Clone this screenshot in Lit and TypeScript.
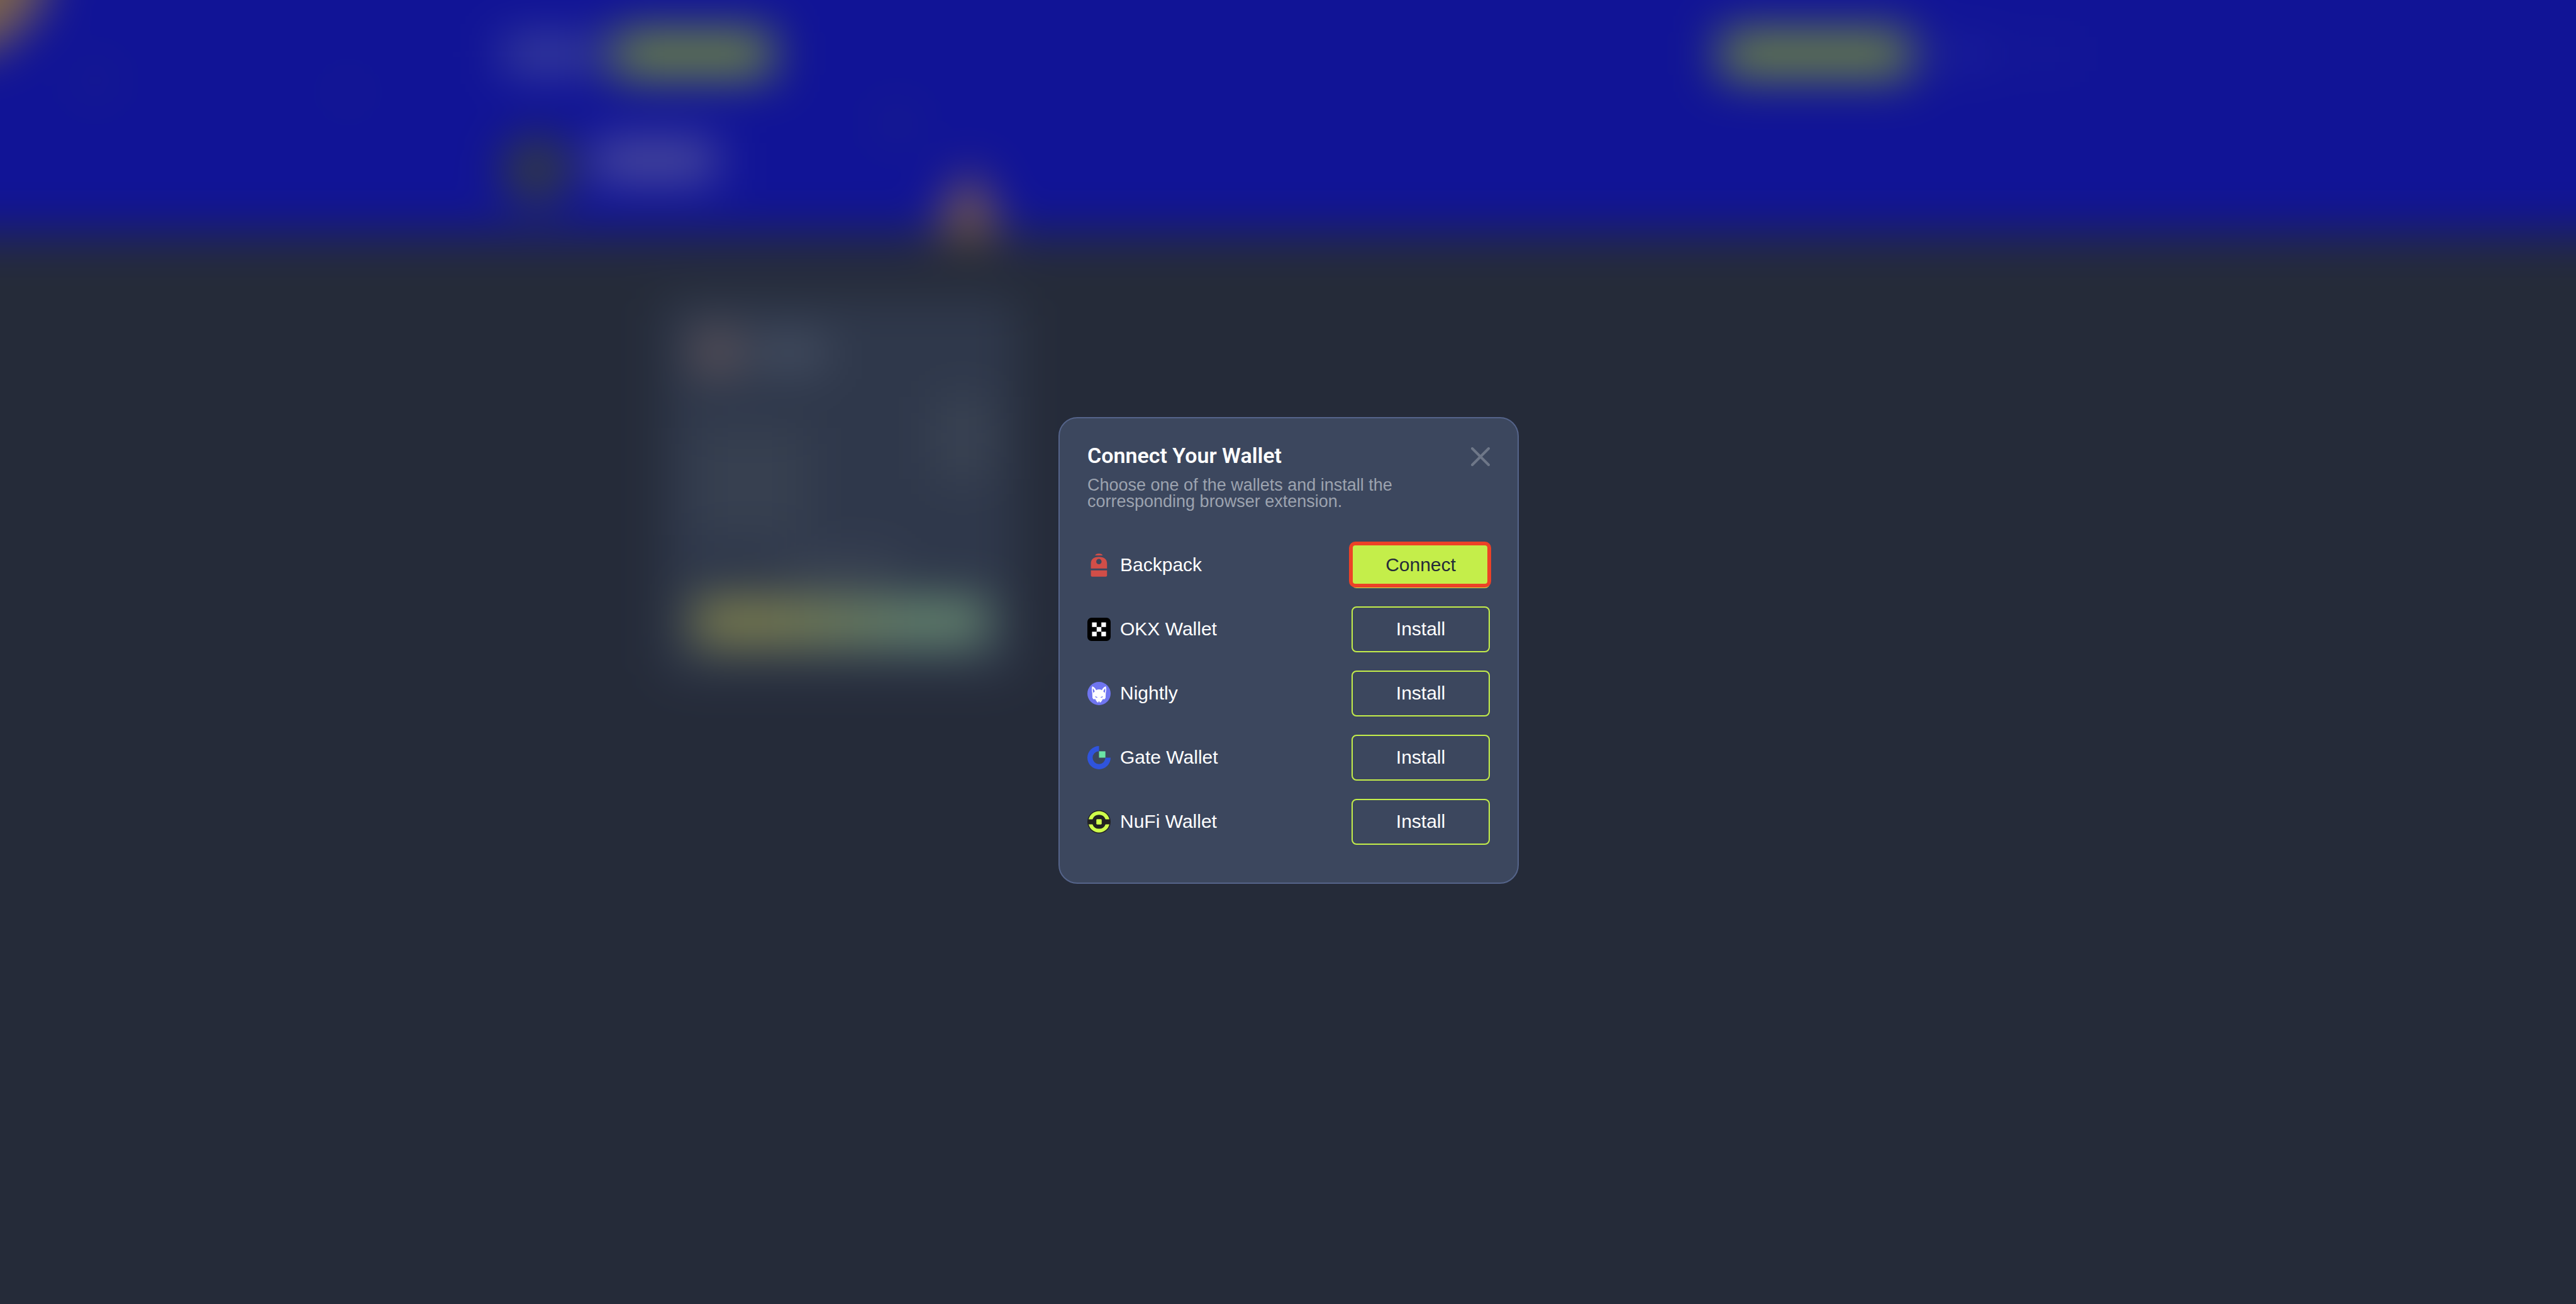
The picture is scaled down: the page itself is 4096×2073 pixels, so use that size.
import { LitElement, html, css, svg, nothing } from "lit";
import { customElement, property } from "lit/decorators.js";

type Wallet = { id: string; name: string; installed: boolean };

const WALLETS: Wallet[] = [
  { id: "backpack", name: "Backpack", installed: true },
  { id: "okx", name: "OKX Wallet", installed: false },
  { id: "nightly", name: "Nightly", installed: false },
  { id: "gate", name: "Gate Wallet", installed: false },
  { id: "nufi", name: "NuFi Wallet", installed: false },
];

const ICONS: Record<string, unknown> = {
  backpack: svg`
    <path fill="#d14e48" d="M13.2 3.3C14 1.2 16.6 0 19.8 0s5.800 1.200 6.600 3.300z"/>
    <path fill="#d14e48" fill-rule="evenodd" d="M6 25.600V17C6 10 11 5.700 19.800 5.700S33.800 10 33.800 17v8.600zM19.800 9.100a4.600 4.600 0 1 0 0 9.200a4.600 4.600 0 1 0 0-9.200z"/>
    <path fill="#d14e48" d="M6 29h27.800v8.600a2.200 2.200 0 0 1-2.200 2.200H8.200A2.200 2.200 0 0 1 6 37.600z"/>`,
  okx: svg`
    <rect width="40" height="40" rx="7" fill="#000"/>
    <path fill="#fff" d="M8 8h8v8H8zM24 8h8v8h-8zM16 16h8v8h-8zM8 24h8v8H8zM24 24h8v8h-8z"/>`,
  nightly: svg`
    <circle cx="20" cy="20" r="20" fill="#6f75f0"/>
    <path fill="#fff" d="M8.300 7.600C11.200 8.800 13.600 11 15.200 14.200C16.600 13.300 18 13 20 13S23.400 13.300 24.800 14.200C26.400 11 28.800 8.800 31.700 7.600C32.800 11.500 32.600 15.500 31.600 19L31.300 27.200L29.800 29.800L26.200 29.600C25.400 32.200 23.600 34.600 21.400 35.600L20.700 33.600H19.300L18.600 35.600C16.400 34.600 14.600 32.200 13.800 29.600L10.200 29.800L8.700 27.200L8.400 19C7.400 15.500 7.200 11.500 8.300 7.600z"/>
    <path fill="#6f75f0" d="M9.500 11.200C11 13 12.200 14.800 12.600 16.600L10.200 18.800C9.300 16.500 9 13.500 9.500 11.200zM30.500 11.200C29 13 27.800 14.800 27.400 16.600L29.800 18.800C30.700 16.500 31 13.500 30.500 11.200zM13.200 24.600L17.400 26.200L16.400 27.300L14 26.600zM26.800 24.600L22.600 26.200L23.600 27.300L26 26.600z"/>`,
  gate: svg`
    <path fill="#2f54dd" d="M20 0A20 20 0 1 0 40 20H31A11 11 0 1 1 20 9z"/>
    <path fill="#6be5a6" d="M20 9h11v11H20z"/>`,
  nufi: svg`
    <circle cx="20" cy="20" r="20" fill="#222"/>
    <path fill="#cfff4b" d="M2.200 15.600A18.300 18.300 0 0 1 37.800 15.600H31.200A12 12 0 0 0 8.800 15.600zM2.200 24.200A18.300 18.300 0 0 0 37.800 24.200H31.200A12 12 0 0 1 8.800 24.200z"/>
    <rect x="15.400" y="15.400" width="9.200" height="9.200" rx="1.600" fill="#cfff4b"/>`,
};

@customElement("wallet-row")
export class WalletRow extends LitElement {
  @property({ attribute: false }) wallet!: Wallet;

  static styles = css`
    :host {
      display: flex;
      align-items: center;
      justify-content: space-between;
    }
    .label {
      display: flex;
      align-items: center;
      gap: 15px;
    }
    .icon {
      width: 37px;
      height: 37px;
      flex: none;
    }
    .name,
    .action {
      font: 400 30px/36px "Liberation Sans", Arial, sans-serif;
      color: #fff;
    }
    .action {
      position: relative;
      box-sizing: border-box;
      width: 220px;
      height: 73px;
      padding: 0;
      border: 2px solid #c4ee4a;
      border-radius: 8px;
      background: transparent;
      cursor: pointer;
    }
    .primary {
      background: #c4ee4a;
      color: #252b39;
    }
    /* Highlight ring drawn over the primary button */
    .primary::after {
      content: "";
      position: absolute;
      inset: -3px -4px -1px -6px;
      border: 6px solid #ec4227;
      border-radius: 10px;
    }
  `;

  render() {
    const w = this.wallet;
    if (!w) return nothing;
    return html`
      <span class="label">
        <svg class="icon" viewBox="0 0 40 40" aria-hidden="true">${ICONS[w.id]}</svg>
        <span class="name" id="name">${w.name}</span>
      </span>
      <button class="action ${w.installed ? "primary" : ""}" aria-describedby="name">
        ${w.installed ? "Connect" : "Install"}
      </button>
    `;
  }
}

/* The blurred page behind the dialog. It bleeds 120px past every window edge
   so that the blur has colour to draw on there. */
@customElement("page-backdrop")
export class PageBackdrop extends LitElement {
  static styles = css`
    :host {
      display: block;
      margin: -120px;
      background: #252b39;
      filter: blur(37px);
    }
    .header {
      position: relative;
      box-sizing: border-box;
      height: 492px;
      padding-top: 169px;
      overflow: hidden;
      background: #111496;
    }
    .art {
      position: absolute;
      left: 120px;
      top: 120px;
      width: calc(100% - 240px);
      height: 372px;
      overflow: visible;
    }
    .container {
      position: relative;
      width: calc(61% - 146px);
      margin: 0 auto;
    }
    .bar,
    .group,
    .profile,
    .token {
      display: flex;
      align-items: center;
    }
    .bar {
      justify-content: space-between;
    }
    .group {
      gap: 28px;
    }
    .logo {
      width: 146px;
      height: 50px;
      background: #43499c;
    }
    .pill {
      width: 256px;
      height: 73px;
      border-radius: 8px;
      background: #6f8840;
    }
    .wide {
      width: 304px;
    }
    .link {
      width: 92px;
      height: 22px;
      margin-left: 34px;
      background: #2a2f9a;
    }
    .dot {
      width: 30px;
      height: 30px;
      margin-left: 36px;
      background: #1c2198;
    }
    .profile {
      gap: 36px;
      margin-top: 94px;
    }
    .avatar {
      width: 108px;
      height: 108px;
      border-radius: 50%;
      background: #333b3f;
    }
    .title {
      width: 196px;
      height: 64px;
      margin-bottom: 30px;
      background: #4f4f9d;
    }
    .card {
      box-sizing: border-box;
      display: flex;
      flex-direction: column;
      justify-content: space-between;
      width: 564px;
      height: 602px;
      margin: 101px 0 0 256px;
      padding: 50px 48px;
      border-radius: 24px;
      background: #2f384b;
    }
    .token {
      gap: 24px;
    }
    .coin {
      width: 73px;
      height: 73px;
      border-radius: 50%;
      background: #65585c;
    }
    .symbol {
      width: 112px;
      height: 44px;
      background: #4b5568;
    }
    .stats {
      display: flex;
      justify-content: space-between;
      align-items: flex-start;
    }
    .labels {
      width: 180px;
      height: 170px;
      margin-top: 50px;
      background: #374050;
    }
    .values {
      width: 80px;
      height: 130px;
      background: #3b4453;
    }
    .hint {
      width: 180px;
      height: 30px;
      align-self: center;
      background: #404858;
    }
    .cta {
      height: 73px;
      border-radius: 8px;
      background: linear-gradient(90deg, #7f814f 25%, #668770 75%);
    }
  `;

  render() {
    return html`
      <div class="header">
        <svg class="art" viewBox="0 0 4478 407" preserveAspectRatio="none">
          <path fill="#7c634e" d="M-130 -130H70L80 0L0 84L-130 100z" />
          <path fill="#8a6648" d="M1684 290L1756 440H1612z" />
          <circle cx="165" cy="140" r="24" fill="#1c2486" />
          <circle cx="605" cy="160" r="20" fill="#191f8c" />
          <circle cx="1560" cy="215" r="26" fill="#1c2486" />
        </svg>
        <div class="container">
          <div class="bar">
            <div class="group"><div class="logo"></div><div class="pill"></div></div>
            <div class="bar">
              <div class="pill wide"></div><div class="link"></div><div class="dot"></div>
              <div class="dot"></div>
            </div>
          </div>
          <div class="profile"><div class="avatar"></div><div class="title"></div></div>
        </div>
      </div>
      <div class="container">
        <div class="card">
          <div class="token"><div class="coin"></div><div class="symbol"></div></div>
          <div class="stats"><div class="labels"></div><div class="values"></div></div>
          <div class="hint"></div>
          <div class="cta"></div>
        </div>
      </div>
    `;
  }
}

@customElement("app-root")
export class AppRoot extends LitElement {
  static styles = css`
    :host {
      display: grid;
      min-height: 100vh;
      overflow: hidden;
      background: #252b39;
    }
    .page,
    .overlay {
      grid-area: 1 / 1;
      min-width: 0;
    }
    .overlay {
      z-index: 1;
      box-sizing: border-box;
      display: flex;
      align-items: center;
      justify-content: center;
      padding: 0 0 6px 2px;
    }
    .modal {
      box-sizing: border-box;
      width: 732px;
      max-width: 100%;
      padding: 44px 44px 60px;
      border: 2px solid #55648a;
      border-radius: 30px;
      background: #3c475e;
    }
    .head {
      display: flex;
      align-items: flex-start;
      justify-content: space-between;
    }
    .heading {
      margin: 0;
      font: 600 34px/30px Roboto, sans-serif;
      color: #fff;
    }
    .close {
      display: flex;
      padding: 2px 0;
      border: 0;
      background: none;
      cursor: pointer;
    }
    .cross {
      width: 30px;
      height: 30px;
      fill: none;
      stroke: #6e7788;
      stroke-width: 4;
      stroke-linecap: round;
    }
    .lead {
      max-width: 560px;
      margin: 15px 0 52px;
      font: 400 27px/26px "Liberation Sans", Arial, sans-serif;
      color: #9ca3af;
    }
    .list {
      display: flex;
      flex-direction: column;
      gap: 29px;
      margin: 0;
      padding: 0;
      list-style: none;
    }
  `;

  render() {
    return html`
      <page-backdrop class="page" aria-hidden="true"></page-backdrop>
      <div class="overlay">
        <section class="modal" role="dialog" aria-modal="true" aria-labelledby="heading">
          <header class="head">
            <h1 class="heading" id="heading">Connect Your Wallet</h1>
            <button class="close" aria-label="Close">
              <svg class="cross" viewBox="0 0 30 30"><path d="M2 2L28 28M28 2L2 28" /></svg>
            </button>
          </header>
          <p class="lead">Choose one of the wallets and install the corresponding browser extension.</p>
          <ul class="list">
            ${WALLETS.map((w) => html`<li><wallet-row .wallet=${w}></wallet-row></li>`)}
          </ul>
        </section>
      </div>
    `;
  }
}
